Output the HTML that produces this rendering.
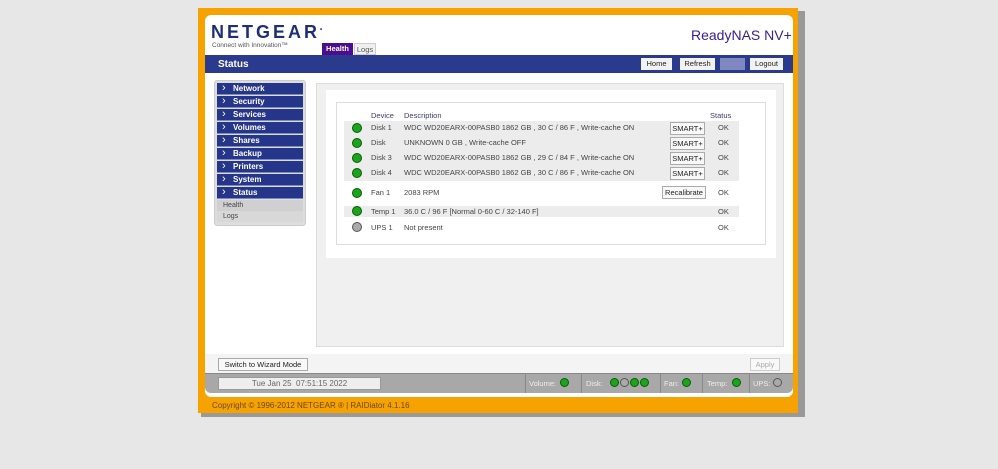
<!DOCTYPE html><html><head><meta charset="utf-8"><style>
*{margin:0;padding:0;box-sizing:border-box}
body{width:998px;height:469px;background:#e7e7e7;font-family:"Liberation Sans",Verdana,sans-serif;position:relative;overflow:hidden}
.a{position:absolute}
.dot{position:absolute;width:10px;height:10px;border-radius:50%;background:#1aa51a;border:1px solid #0a5a0a}
.g{background:#aaa;border-color:#555}
.t{position:absolute;font-size:7.5px;color:#444;white-space:nowrap}
.nav{position:absolute;left:217px;width:86px;height:12px;background:#25358a;color:#fff;font-weight:bold;font-size:8px;line-height:12px;padding-left:16px;border-bottom:1px solid #7a8ac0}
.nav:before{content:"›";position:absolute;left:5px;top:-1px;font-size:11px;font-weight:normal}
.btn{position:absolute;height:13px;border:1px solid #aaa;background:#f8f8f8;font-size:7.5px;line-height:11px;text-align:center;color:#222}
.tb{position:absolute;top:58px;height:12px;background:#f2f2f2;font-size:7.5px;line-height:12px;text-align:center;color:#222}
.row{position:absolute;left:344px;width:395px;background:#ececec}
</style></head><body>
<div class="a" style="left:201px;top:11px;width:604px;height:406px;background:#666;opacity:.6"></div>
<div class="a" style="left:198px;top:8px;width:600px;height:405px;background:#f6a200"></div>
<div class="a" style="left:205px;top:15px;width:588px;height:382px;background:#fff;border-radius:6px;overflow:hidden">
 <div class="a" style="left:0;top:40px;width:588px;height:18px;background:#2a3a8c"></div>
</div>
<div class="a" style="left:211px;top:22px;font-size:18px;font-weight:bold;letter-spacing:3px;color:#1e2e7a">NETGEAR<sup style="font-size:6px">•</sup></div>
<div class="a" style="left:212px;top:42px;font-size:6.5px;color:#555">Connect with Innovation™</div>
<div class="a" style="left:322px;top:43px;width:31px;height:12px;background:#4a0d8e;color:#fff;font-size:7.5px;font-weight:bold;line-height:12px;text-align:center">Health</div>
<div class="a" style="left:354px;top:43px;width:22px;height:12px;background:#f0f0f0;color:#555;font-size:7.5px;line-height:12px;text-align:center;border:1px solid #ccc">Logs</div>
<div class="a" style="left:691px;top:27px;font-size:14px;color:#3a2090">ReadyNAS NV+</div>
<div class="a" style="left:218px;top:59px;font-size:10px;font-weight:bold;color:#fff">Status</div>
<div class="tb" style="left:641px;width:31px">Home</div>
<div class="tb" style="left:680px;width:35px">Refresh</div>
<div class="tb" style="left:720px;width:25px;background:#7f88c0;color:#9aa"></div>
<div class="tb" style="left:750px;width:33px">Logout</div>
<div class="a" style="left:214px;top:80px;width:92px;height:146px;background:#ddd;border:1px solid #ccc;border-radius:3px"></div>
<div class="nav" style="top:83px">Network</div><div class="nav" style="top:96px">Security</div><div class="nav" style="top:109px">Services</div><div class="nav" style="top:122px">Volumes</div><div class="nav" style="top:135px">Shares</div><div class="nav" style="top:148px">Backup</div><div class="nav" style="top:161px">Printers</div><div class="nav" style="top:174px">System</div><div class="nav" style="top:187px">Status</div>
<div class="a" style="left:217px;top:200px;width:86px;height:11px;background:#d0d0d0;font-size:7px;color:#444;padding:2px 6px">Health</div>
<div class="a" style="left:217px;top:211px;width:86px;height:11px;background:#d8d8d8;font-size:7px;color:#444;padding:2px 6px">Logs</div>
<div class="a" style="left:316px;top:83px;width:468px;height:264px;background:#f0f0f0;border:1px solid #ddd"></div>
<div class="a" style="left:326px;top:90px;width:450px;height:168px;background:#fff"></div>
<div class="a" style="left:336px;top:102px;width:430px;height:143px;border:1px solid #ddd"></div>
<div class="row" style="top:121px;height:60px"></div>
<div class="row" style="top:206px;height:11px"></div>
<div class="t" style="left:371px;top:111px;color:#3a3a70">Device</div>
<div class="t" style="left:404px;top:111px;color:#3a3a70">Description</div>
<div class="t" style="left:710px;top:111px;color:#3a3a70">Status</div>
<div class="dot" style="left:352px;top:123px"></div><div class="t" style="left:371px;top:123px">Disk 1</div><div class="t" style="left:404px;top:123px">WDC WD20EARX-00PASB0 1862 GB , 30 C / 86 F , Write-cache ON</div><div class="btn" style="left:670px;top:122px;width:35px">SMART+</div><div class="t" style="left:718px;top:123px">OK</div>
<div class="dot" style="left:352px;top:138px"></div><div class="t" style="left:371px;top:138px">Disk</div><div class="t" style="left:404px;top:138px">UNKNOWN 0 GB , Write-cache OFF</div><div class="btn" style="left:670px;top:137px;width:35px">SMART+</div><div class="t" style="left:718px;top:138px">OK</div>
<div class="dot" style="left:352px;top:153px"></div><div class="t" style="left:371px;top:153px">Disk 3</div><div class="t" style="left:404px;top:153px">WDC WD20EARX-00PASB0 1862 GB , 29 C / 84 F , Write-cache ON</div><div class="btn" style="left:670px;top:152px;width:35px">SMART+</div><div class="t" style="left:718px;top:153px">OK</div>
<div class="dot" style="left:352px;top:168px"></div><div class="t" style="left:371px;top:168px">Disk 4</div><div class="t" style="left:404px;top:168px">WDC WD20EARX-00PASB0 1862 GB , 30 C / 86 F , Write-cache ON</div><div class="btn" style="left:670px;top:167px;width:35px">SMART+</div><div class="t" style="left:718px;top:168px">OK</div>
<div class="dot" style="left:352px;top:188px"></div><div class="t" style="left:371px;top:188px">Fan 1</div><div class="t" style="left:404px;top:188px">2083 RPM</div><div class="btn" style="left:662px;top:186px;width:44px">Recalibrate</div><div class="t" style="left:718px;top:188px">OK</div>
<div class="dot" style="left:352px;top:206px"></div><div class="t" style="left:371px;top:207px">Temp 1</div><div class="t" style="left:404px;top:207px">36.0 C / 96 F [Normal 0-60 C / 32-140 F]</div><div class="t" style="left:718px;top:207px">OK</div>
<div class="dot g" style="left:352px;top:222px"></div><div class="t" style="left:371px;top:223px">UPS 1</div><div class="t" style="left:404px;top:223px">Not present</div><div class="t" style="left:718px;top:223px">OK</div>
<div class="a" style="left:205px;top:354px;width:588px;height:19px;background:#f4f4f4"></div>
<div class="btn" style="left:218px;top:358px;width:90px;height:13px;line-height:11px">Switch to Wizard Mode</div>
<div class="btn" style="left:750px;top:358px;width:30px;height:13px;line-height:11px;color:#aaa;border-color:#ccc">Apply</div>
<div class="a" style="left:205px;top:373px;width:588px;height:20px;background:#a8a8a8;border-top:1px solid #888;border-radius:0 0 6px 6px"></div>
<div class="a" style="left:218px;top:377px;width:163px;height:13px;background:#eee;border:1px solid #999;font-size:8px;color:#666;text-align:center;line-height:11px">Tue Jan 25&nbsp; 07:51:15 2022</div>
<div class="a" style="left:525px;top:374px;width:1px;height:19px;background:#888"></div>
<div class="a" style="left:581px;top:374px;width:1px;height:19px;background:#888"></div>
<div class="a" style="left:660px;top:374px;width:1px;height:19px;background:#888"></div>
<div class="a" style="left:702px;top:374px;width:1px;height:19px;background:#888"></div>
<div class="a" style="left:749px;top:374px;width:1px;height:19px;background:#888"></div>
<div class="t" style="left:529px;top:379px;color:#eee">Volume:</div><div class="dot" style="left:560px;top:378px;width:9px;height:9px"></div>
<div class="t" style="left:586px;top:379px;color:#eee">Disk:</div><div class="dot" style="left:610px;top:378px;width:9px;height:9px"></div><div class="dot g" style="left:620px;top:378px;width:9px;height:9px"></div><div class="dot" style="left:630px;top:378px;width:9px;height:9px"></div><div class="dot" style="left:640px;top:378px;width:9px;height:9px"></div>
<div class="t" style="left:664px;top:379px;color:#eee">Fan:</div><div class="dot" style="left:682px;top:378px;width:9px;height:9px"></div>
<div class="t" style="left:707px;top:379px;color:#eee">Temp:</div><div class="dot" style="left:732px;top:378px;width:9px;height:9px"></div>
<div class="t" style="left:753px;top:379px;color:#eee">UPS:</div><div class="dot g" style="left:773px;top:378px;width:9px;height:9px"></div>
<div class="a" style="left:212px;top:401px;font-size:8px;color:#6a4a10">Copyright © 1996-2012 NETGEAR ® | RAIDiator 4.1.16</div>
</body></html>
